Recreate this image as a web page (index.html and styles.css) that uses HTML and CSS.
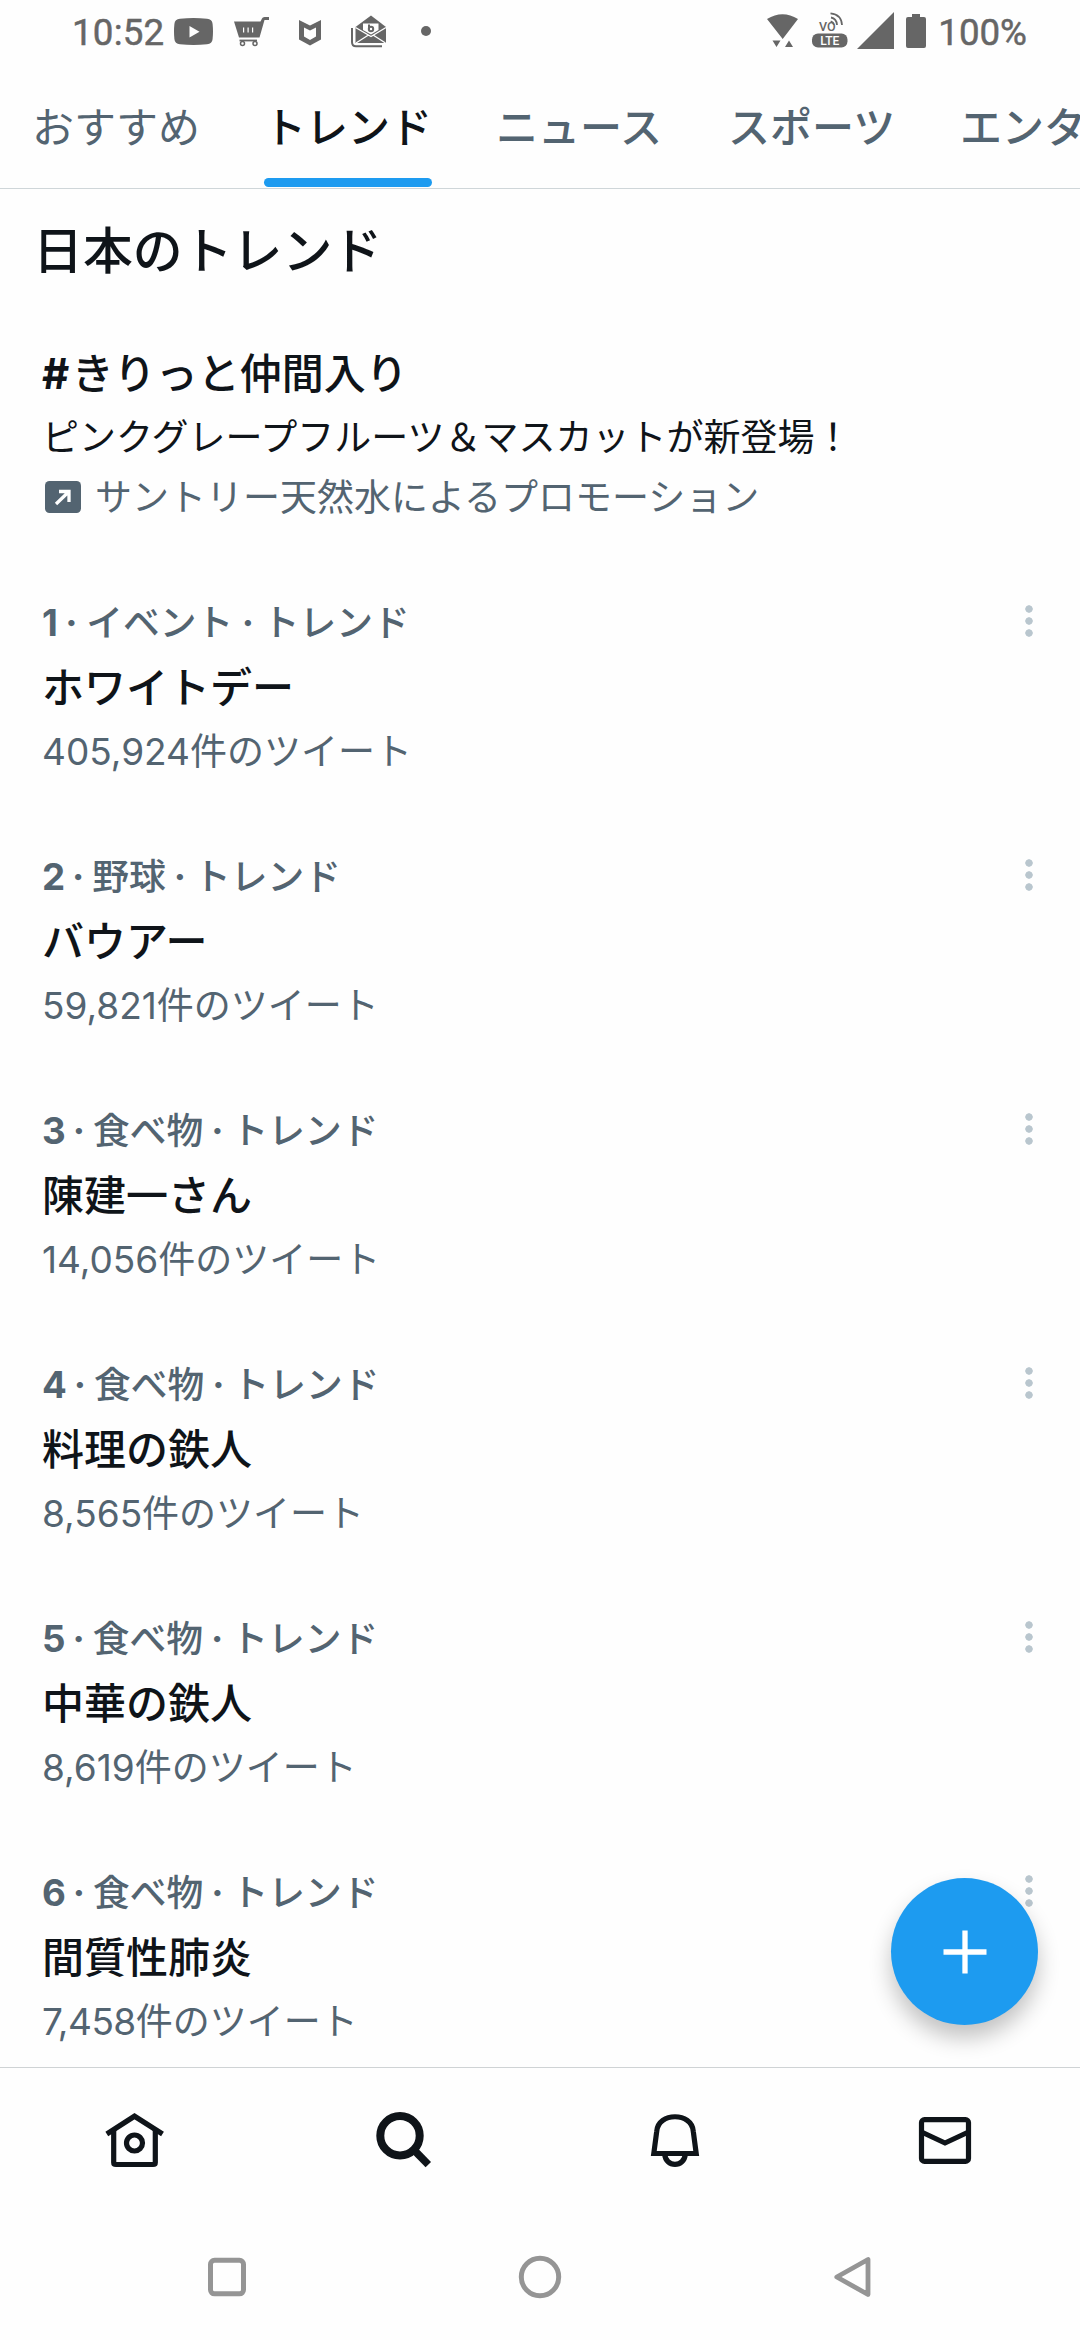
FILE: index.html
```html
<!DOCTYPE html>
<html lang="ja">
<head>
<meta charset="utf-8">
<title>日本のトレンド</title>
<link rel="stylesheet" href="styles.css">
</head>
<body>
<div class="screen">
  <header class="status">
    <span class="clock">10:52</span>
    <svg class="ic-video" viewBox="0 0 39 27" width="39" height="27"><path fill="currentColor" fill-rule="evenodd" d="M6 .7Q19.500-.7 33 .7 38.200 1 38.600 6 39.400 13.500 38.600 21 38.200 26 33 26.300 19.500 27.700 6 26.300.8 26 .4 21-.4 13.500.4 6 .8 1 6 .7ZM15.500 8v11.500L25.500 13.700Z"/></svg>
    <svg class="ic-cart" viewBox="0 0 36 30" width="36" height="30"><path fill="currentColor" fill-rule="evenodd" d="M0 4.500H26.500L28 1.500Q28.500 0 30.500 0H35V3H30.500L25.500 20.500H5ZM9 10.500V15.500H10.200V10.500ZM13.500 10.500V15.500H14.700V10.500ZM18 10.500V15.500H19.200V10.500Z"/><path d="M5.500 23.500H23" stroke="currentColor" stroke-width="1.800"/><circle cx="8.500" cy="26.500" r="2" fill="none" stroke="currentColor" stroke-width="1.500"/><circle cx="21" cy="26.500" r="2" fill="none" stroke="currentColor" stroke-width="1.500"/></svg>
    <svg class="ic-shield" viewBox="0 0 22 26" width="22" height="26"><path fill="currentColor" fill-rule="evenodd" d="M0 0 11 5.500 22 0V19.500L11 25.500 0 19.500ZM5 7.500V16.500L11 20 17 16.500V7.500L11 10.500Z"/></svg>
    <svg class="ic-letter" viewBox="0 0 36 33" width="36" height="33"><path d="M1 13V27Q1 31.300 5 31.300H31" fill="none" stroke="currentColor" stroke-width="2"/><path fill="currentColor" d="M4.500 12 20 .5 35 12V28H4.500Z"/><path fill="#fff" d="M12 8.500H27.500V15L20 19.500 12 15Z"/><path d="M4.500 12.500 20 21.500 35 12.500M5 28 17.500 20M34.500 28 22 20" fill="none" stroke="#fff" stroke-width="1.300"/><path d="M18 9.500V14.500" fill="none" stroke="currentColor" stroke-width="2"/><circle cx="20" cy="14" r="2.200" fill="none" stroke="currentColor" stroke-width="2"/></svg>
    <span class="more-dot"></span>
    <span class="spacer"></span>
    <svg class="ic-wifi" viewBox="0 0 32 34" width="32" height="34"><path fill="currentColor" d="M0 5Q15.500-4.500 31 5L15.700 25ZM5.500 26.500H13.500L9.500 33ZM18 33H26L22 26.500Z"/></svg>
    <svg class="ic-volte" viewBox="0 0 36 36" width="36" height="36"><rect x="0" y="21.500" width="35.500" height="14" rx="6" fill="currentColor"/><text x="17.700" y="32.700" text-anchor="middle" class="lte">LTE</text><text x="7" y="18.500" class="vo">VO</text><path d="M19 5.500Q24.500 6.500 25 13M18.500 1.300Q29.500 2.500 30 13" fill="none" stroke="currentColor" stroke-width="1.800"/><path d="M18.700 9.200Q21.500 10 21.800 13" fill="none" stroke="currentColor" stroke-width="1.500"/></svg>
    <svg class="ic-signal" viewBox="0 0 37 37" width="37" height="37"><path fill="currentColor" d="M37 0V37H0Z"/></svg>
    <svg class="ic-battery" viewBox="0 0 20 34" width="20" height="34"><path fill="currentColor" d="M6 0H14V3H18Q20 3 20 5V32Q20 34 18 34H2Q0 34 0 32V5Q0 3 2 3H6Z"/></svg>
    <span class="percent">100%</span>
  </header>

  <nav class="tabs">
    <span class="tab tab-light">おすすめ</span>
    <span class="tab tab-active">トレンド</span>
    <span class="tab">ニュース</span>
    <span class="tab">スポーツ</span>
    <span class="tab">エンタメ</span>
  </nav>

  <main class="feed">
    <h1 class="heading">日本のトレンド</h1>
    <section class="promo">
      <div class="promo-title"><b>#</b>きりっと仲間入り</div>
      <div class="promo-text">ピンクグレープフルーツ＆マスカットが新登場！</div>
      <div class="promo-by">
        <svg viewBox="0 0 36 32" width="36" height="32"><rect width="36" height="32" rx="4.500" fill="currentColor"/><path d="M14 10.500H24V21M23.500 11 11 23" fill="none" stroke="#fff" stroke-width="3.300"/></svg>
        <span>サントリー天然水によるプロモーション</span>
      </div>
    </section>
    <section class="trend"><div class="texts"><div class="meta meta-first"><b>1 ·</b> イベント <b>·</b> トレンド</div><div class="name">ホワイトデー</div><div class="count">405,924件のツイート</div></div><i class="kebab"></i></section>
    <section class="trend"><div class="texts"><div class="meta"><b>2 ·</b> 野球 <b>·</b> トレンド</div><div class="name">バウアー</div><div class="count">59,821件のツイート</div></div><i class="kebab"></i></section>
    <section class="trend"><div class="texts"><div class="meta"><b>3 ·</b> 食べ物 <b>·</b> トレンド</div><div class="name">陳建一さん</div><div class="count">14,056件のツイート</div></div><i class="kebab"></i></section>
    <section class="trend"><div class="texts"><div class="meta"><b>4 ·</b> 食べ物 <b>·</b> トレンド</div><div class="name">料理の鉄人</div><div class="count">8,565件のツイート</div></div><i class="kebab"></i></section>
    <section class="trend"><div class="texts"><div class="meta"><b>5 ·</b> 食べ物 <b>·</b> トレンド</div><div class="name">中華の鉄人</div><div class="count">8,619件のツイート</div></div><i class="kebab"></i></section>
    <section class="trend"><div class="texts"><div class="meta"><b>6 ·</b> 食べ物 <b>·</b> トレンド</div><div class="name">間質性肺炎</div><div class="count"><span class="tight">7,458</span>件のツイート</div></div><i class="kebab"></i></section>
    <button class="fab" aria-label="ツイートする"><svg viewBox="0 0 44 44" width="44" height="44"><path d="M22 .5V43.500M.5 22H43.500" stroke="#fff" stroke-width="5.300"/></svg></button>
  </main>

  <nav class="bottom">
    <svg viewBox="0 0 64 64" width="64" height="64"><g fill="none" stroke="currentColor" stroke-width="5.200"><path d="M3.800 25 31.500 7.200 59.500 25"/><path d="M10.700 20V53.500Q10.700 55.500 13 55.500H50Q52.300 55.500 52.300 53.500V20"/><circle cx="31.500" cy="34" r="8"/></g></svg>
    <svg viewBox="0 0 64 64" width="64" height="64"><g fill="none" stroke="currentColor" stroke-width="8"><circle cx="27" cy="26.700" r="19.700"/><path d="M41 41 55.300 55.700" stroke-width="7.600"/></g></svg>
    <svg viewBox="0 0 64 64" width="64" height="64"><g fill="none" stroke="currentColor" stroke-width="5.200"><path d="M10.800 44.500 13.700 22.500C15 2.800 49 2.800 50.300 22.500L53.200 44.500Z"/><path d="M21.700 45C22.500 58.700 41.500 58.700 42.300 45"/></g></svg>
    <svg viewBox="0 0 64 64" width="64" height="64"><g fill="none" stroke="currentColor" stroke-width="5.200"><rect x="8.500" y="10.600" width="47" height="41.800" rx="3"/><path d="M8.500 23 32 34 55.500 23"/></g></svg>
  </nav>

  <footer class="system">
    <svg viewBox="0 0 44 44" width="44" height="44"><rect x="5.500" y="5.300" width="33" height="33.500" rx="4" fill="none" stroke="currentColor" stroke-width="5"/></svg>
    <svg viewBox="0 0 44 44" width="44" height="44"><circle cx="22" cy="22" r="18.700" fill="none" stroke="currentColor" stroke-width="5"/></svg>
    <svg viewBox="0 0 44 44" width="44" height="44"><path d="M37 4.500V39.500L5.800 22Z" fill="none" stroke="currentColor" stroke-width="4.800" stroke-linejoin="round"/></svg>
  </footer>
</div>
</body>
</html>
```
FILE: styles.css
```css
* { box-sizing: border-box; }
body { margin: 0; background: #fefefe; }
.screen {
  width: 1080px; height: 2340px; overflow: hidden;
  display: flex; flex-direction: column;
  font-family: Inter, "Noto Sans CJK JP", sans-serif;
  color: #0f1419; white-space: nowrap;
}
svg { display: block; flex: none; }

.status {
  height: 64px; padding: 0 53px 0 72px; display: flex; align-items: flex-start;
  color: #666; font: 400 36.700px/42px Roboto, sans-serif;
  -webkit-text-stroke: .5px #666;
}
.clock { width: 102px; margin-top: 12px; letter-spacing: .2px; }
.percent { margin: 12px 0 0 12px; }
.ic-video { margin-top: 18px; }
.ic-cart { margin: 17px 0 0 21px; }
.ic-shield { margin: 20px 0 0 29px; }
.ic-letter { margin: 15px 0 0 30px; }
.more-dot { width: 10px; height: 10px; border-radius: 50%; background: currentColor; margin: 26px 0 0 34px; }
.spacer { flex: 1; }
.ic-wifi { margin-top: 14px; }
.ic-volte { margin: 12px 0 0 13px; overflow: visible; -webkit-text-stroke: 0; }
.ic-signal { margin: 12px 0 0 9px; }
.ic-battery { margin: 14px 0 0 12px; }
.lte { font: 500 12px Roboto, sans-serif; fill: #fff; }
.vo { font: 500 12.500px Roboto, sans-serif; fill: currentColor; }

.tabs {
  height: 125px; flex: none; padding: 0 32px; display: flex; gap: 64px;
  border-bottom: 1px solid #cfd6d9; color: #536471;
  font-size: 42px; font-weight: 500; line-height: 128px;
}
.tab { flex: none; height: 123px; width: 168px; }
.tab-light { font-weight: 400; }
.tab-active { color: #0f1419; display: flex; flex-direction: column; }
.tab-active::after {
  content: ""; height: 9px; margin-top: -14px; border-radius: 4.500px; background: #1d9bf0;
}

.feed { height: 1878px; flex: none; position: relative; overflow: hidden; }
.heading { margin: 0; padding-left: 33px; height: 152px; font-size: 49.900px; font-weight: 500; line-height: 124px; }
.promo { height: 249px; padding-left: 42px; }
.promo-title { font-size: 42px; font-weight: 500; line-height: 65px; }
.promo-title b { letter-spacing: 2.500px; }
.promo-text { font-size: 37px; line-height: 63px; }
.promo-by { display: flex; align-items: center; gap: 14px; margin-left: 3px; color: #536471; font-size: 37px; line-height: 57px; }
.promo-by svg { margin-top: -2px; }
.trend { height: 254px; padding: 0 48px 0 42px; display: flex; justify-content: space-between; }
.meta { color: #536471; font-size: 36.750px; font-weight: 500; line-height: 65px; word-spacing: -1.800px; }
.meta-first { word-spacing: -1.200px; }
.meta b { font-weight: 700; }
.name { font-size: 42px; font-weight: 500; line-height: 65px; }
.count { color: #536471; font-size: 37px; line-height: 63px; }
.tight { letter-spacing: -.5px; }
.kebab {
  width: 8px; height: 32px; margin: 15px -1px 0 0;
  background: radial-gradient(circle at 50% 50%, #b9c6ce 3.400px, transparent 4px) 0 0 / 8px 12px repeat-y;
  background-position: 0 -2px;
}
.fab {
  position: absolute; left: 891px; top: 1689px; width: 147px; height: 147px;
  padding: 0; border: 0; border-radius: 50%; background: #1d9bf0;
  display: flex; align-items: center; justify-content: center;
  box-shadow: 0 13px 22px rgba(0, 0, 0, .24);
}

.bottom {
  height: 147px; flex: none; border-top: 1px solid #cfd3d5;
  display: grid; grid-template-columns: repeat(4, 1fr); justify-items: center; padding-top: 41px;
}
.system {
  height: 126px; flex: none; padding: 41px 205px 0; display: flex; justify-content: space-between; color: #959595;
}
```
